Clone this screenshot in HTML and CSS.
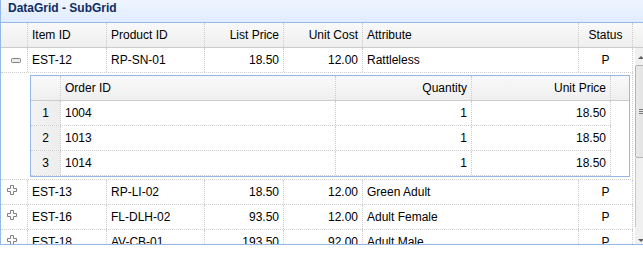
FILE: index.html
```html
<!DOCTYPE html>
<html>
<head>
<meta charset="utf-8">
<link rel="stylesheet" href="styles.css">
</head>
<body>
<div class="panel">
  <div class="title">DataGrid - SubGrid</div>
  <div class="header">
    <div class="cell c-exp"></div>
    <div class="cell c-item">Item ID</div>
    <div class="cell c-prod">Product ID</div>
    <div class="cell c-list r">List Price</div>
    <div class="cell c-cost r">Unit Cost</div>
    <div class="cell c-attr">Attribute</div>
    <div class="cell c-stat c">Status</div>
  </div>
  <div class="body">
    <div class="rows">
      <div class="row">
        <div class="cell c-exp"><svg class="ico" width="16" height="16" viewBox="0 0 16 16"><rect x="5.5" y="6.5" width="9" height="4" rx="1" fill="#ececec" stroke="#808080"/></svg></div>
        <div class="cell c-item">EST-12</div>
        <div class="cell c-prod">RP-SN-01</div>
        <div class="cell c-list r">18.50</div>
        <div class="cell c-cost r">12.00</div>
        <div class="cell c-attr">Rattleless</div>
        <div class="cell c-stat c">P</div>
      </div>
      <div class="detail">
        <div class="sub">
          <div class="shead">
            <div class="cell s-rn"></div>
            <div class="cell s-oid">Order ID</div>
            <div class="cell s-qty r">Quantity</div>
            <div class="cell s-up r">Unit Price</div>
            <div class="s-fill"></div>
          </div>
          <div class="srow">
            <div class="cell s-rn rn">1</div>
            <div class="cell s-oid">1004</div>
            <div class="cell s-qty r">1</div>
            <div class="cell s-up r">18.50</div>
          </div>
          <div class="srow">
            <div class="cell s-rn rn">2</div>
            <div class="cell s-oid">1013</div>
            <div class="cell s-qty r">1</div>
            <div class="cell s-up r">18.50</div>
          </div>
          <div class="srow">
            <div class="cell s-rn rn">3</div>
            <div class="cell s-oid">1014</div>
            <div class="cell s-qty r">1</div>
            <div class="cell s-up r">18.50</div>
          </div>
        </div>
      </div>
      <div class="row">
        <div class="cell c-exp"><svg class="ico plus" width="16" height="16" viewBox="0 0 16 16"><path d="M6.5 2.5h3v3h3v3h-3v3h-3v-3h-3v-3h3z" fill="#fafafa" stroke="#808080"/></svg></div>
        <div class="cell c-item">EST-13</div>
        <div class="cell c-prod">RP-LI-02</div>
        <div class="cell c-list r">18.50</div>
        <div class="cell c-cost r">12.00</div>
        <div class="cell c-attr">Green Adult</div>
        <div class="cell c-stat c">P</div>
      </div>
      <div class="row">
        <div class="cell c-exp"><svg class="ico plus" width="16" height="16" viewBox="0 0 16 16"><path d="M6.5 2.5h3v3h3v3h-3v3h-3v-3h-3v-3h3z" fill="#fafafa" stroke="#808080"/></svg></div>
        <div class="cell c-item">EST-16</div>
        <div class="cell c-prod">FL-DLH-02</div>
        <div class="cell c-list r">93.50</div>
        <div class="cell c-cost r">12.00</div>
        <div class="cell c-attr">Adult Female</div>
        <div class="cell c-stat c">P</div>
      </div>
      <div class="row">
        <div class="cell c-exp"><svg class="ico plus" width="16" height="16" viewBox="0 0 16 16"><path d="M6.5 2.5h3v3h3v3h-3v3h-3v-3h-3v-3h3z" fill="#fafafa" stroke="#808080"/></svg></div>
        <div class="cell c-item">EST-18</div>
        <div class="cell c-prod">AV-CB-01</div>
        <div class="cell c-list r">193.50</div>
        <div class="cell c-cost r">92.00</div>
        <div class="cell c-attr">Adult Male</div>
        <div class="cell c-stat c">P</div>
      </div>
    </div>
    <div class="vscroll">
      <div class="sb-btn up"></div>
      <div class="sb-thumb"><span class="grip"></span></div>
      <div class="sb-track"></div>
      <div class="sb-btn down"></div>
    </div>
  </div>
</div>
</body>
</html>
```
FILE: styles.css
```css
html, body {
  margin: 0;
  padding: 0;
}
body {
  width: 643px;
  height: 253px;
  overflow: hidden;
  background: #fff;
  font: 12px "Liberation Sans", Arial, sans-serif;
  color: #000;
}
.panel {
  width: 660px;
  border-left: 1px solid #95b8e7;
  border-bottom: 1px solid #95b8e7;
}
.title {
  height: 22px;
  line-height: 16px;
  padding-left: 7px;
  font-weight: bold;
  color: #0e2d5f;
  background: linear-gradient(#eff5ff, #e0ecff);
  border-bottom: 1px solid #95b8e7;
}
.header {
  display: flex;
  height: 24px;
  background: linear-gradient(#f9f9f9, #efefef);
  border-bottom: 1px solid #ccc;
}
.cell {
  box-sizing: border-box;
  flex: none;
  height: 24px;
  line-height: 24px;
  padding: 0 4px;
  border-right: 1px dotted #ccc;
  white-space: nowrap;
  overflow: hidden;
}
.r { text-align: right; }
.c { text-align: center; }
.c-exp { width: 27px; padding: 0; display: flex; align-items: center; }
.c-item { width: 79px; }
.c-prod { width: 98px; }
.c-list { width: 79px; }
.c-cost { width: 79px; }
.c-attr { width: 216px; }
.c-stat { width: 54px; }
.ico { display: block; margin-left: 5px; }
.plus { margin-left: 3px; margin-top: -3px; }
.body {
  display: flex;
  height: 196px;
  overflow: hidden;
}
.rows {
  width: 632px;
  flex: none;
}
.row {
  display: flex;
  box-sizing: border-box;
  height: 25px;
  border-bottom: 1px dotted #ccc;
}
.detail {
  box-sizing: border-box;
  padding: 2px 2px 2px 29px;
  border-right: 1px dotted #ccc;
  border-bottom: 1px dotted #ccc;
}
.sub {
  border: 1px solid #95b8e7;
}
.shead {
  display: flex;
  height: 24px;
  background: linear-gradient(#f9f9f9, #efefef);
  border-bottom: 1px solid #ccc;
}
.srow {
  display: flex;
  box-sizing: border-box;
  width: 580px;
  height: 25px;
  border-bottom: 1px dotted #ccc;
}
.s-rn { width: 30px; text-align: center; }
.rn { background: linear-gradient(to right, #f3f3f3, #ededed); }
.s-oid { width: 275px; }
.s-qty { width: 136px; }
.s-up { width: 139px; }
.s-fill { flex: 1; }
.vscroll {
  flex: none;
  width: 17px;
  margin-left: 2px;
  display: flex;
  flex-direction: column;
  background: #f0f0f0;
}
.sb-btn {
  height: 17px;
  flex: none;
  position: relative;
}
.sb-btn::after {
  content: "";
  position: absolute;
  left: 3px;
  width: 0;
  height: 0;
  border-left: 3px solid transparent;
  border-right: 3px solid transparent;
}
.up::after { top: 8px; border-bottom: 3px solid #606060; }
.down::after { bottom: 2px; border-top: 3px solid #606060; }
.sb-thumb {
  height: 93px;
  flex: none;
  box-sizing: border-box;
  border: 1px solid #b4b4b4;
  border-radius: 2px;
  background: linear-gradient(to right, #eaeaea, #dcdcdc);
  display: flex;
  align-items: center;
  justify-content: flex-start;
  padding-left: 3px;
}
.grip {
  display: block;
  width: 7px;
  height: 5px;
  background: repeating-linear-gradient(#7a7a7a 0 1px, transparent 1px 2px);
}
.sb-track {
  flex: 1;
  border-left: 1px solid #c8c8c8;
}
```
